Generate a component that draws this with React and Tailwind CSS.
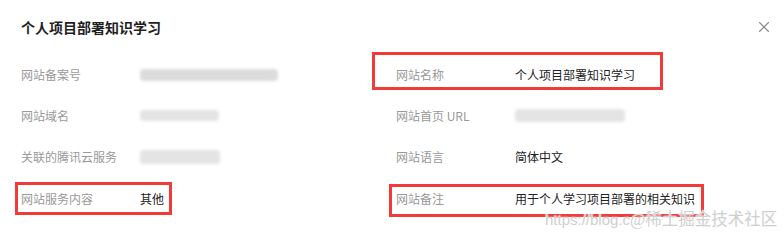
import { X } from "lucide-react";

const font = { fontFamily: '"Noto Sans CJK SC", "Noto Sans", sans-serif' };

function Blur({ w, h = 12, c = "bg-[#e4e4e4]" }) {
  return <div className={`rounded-sm blur-[1.5px] ${c}`} style={{ width: w, height: h }} />;
}

function Row({ label, children }) {
  return (
    <div className="flex h-[41.33px] items-center text-[12px]">
      <div className="w-[119px] shrink-0 text-[#999]">{label}</div>
      <div className="text-[#222]">{children}</div>
    </div>
  );
}

export default function App() {
  return (
    <div className="relative h-[235px] w-[784px] overflow-hidden bg-white" style={font}>
      <div className="flex items-center justify-between pl-[21px] pr-[11px] pt-[17px]">
        <h1 className="text-[14px] font-bold leading-5 text-[#1f1f1f]">个人项目部署知识学习</h1>
        <X size={18} strokeWidth={1.5} className="text-[#8a8a8a]" />
      </div>

      <div className="mt-[17px] grid grid-cols-[375px_1fr] pl-[21px]">
        <div>
          <Row label="网站备案号"><Blur w={138} c="bg-[#dcdcdc]" /></Row>
          <Row label="网站域名"><Blur w={79} h={11} /></Row>
          <Row label="关联的腾讯云服务"><Blur w={80} h={14} /></Row>
          <Row label="网站服务内容">其他</Row>
        </div>
        <div>
          <Row label="网站名称">个人项目部署知识学习</Row>
          <Row label="网站首页 URL"><Blur w={110} h={13} /></Row>
          <Row label="网站语言">简体中文</Row>
          <Row label="网站备注">用于个人学习项目部署的相关知识</Row>
        </div>
      </div>

      {/* annotation boxes */}
      <div className="pointer-events-none absolute left-[372px] top-[52px] h-[38px] w-[291px] border-[3px] border-[#f23a3a]" />
      <div className="pointer-events-none absolute left-[15px] top-[182px] h-[33px] w-[157px] border-[3px] border-[#f23a3a]" />
      <div className="pointer-events-none absolute left-[389px] top-[184px] h-[33px] w-[315px] border-[3px] border-[#f23a3a]" />

      {/* watermark */}
      <div
        className="pointer-events-none absolute left-[545px] top-[208px] flex items-center text-[#cfcfcf]"
        style={{ textShadow: "0 0 1px #fff, 0 0 2px #fff" }}
      >
        <span className="text-[15px]" style={{ fontFamily: '"Liberation Sans", sans-serif' }}>https://blog.c</span>
        <span className="text-[16.5px]" style={{ fontFamily: '"Liberation Serif", "Noto Sans CJK SC", serif' }}>@稀土掘金技术社区</span>
      </div>
    </div>
  );
}
